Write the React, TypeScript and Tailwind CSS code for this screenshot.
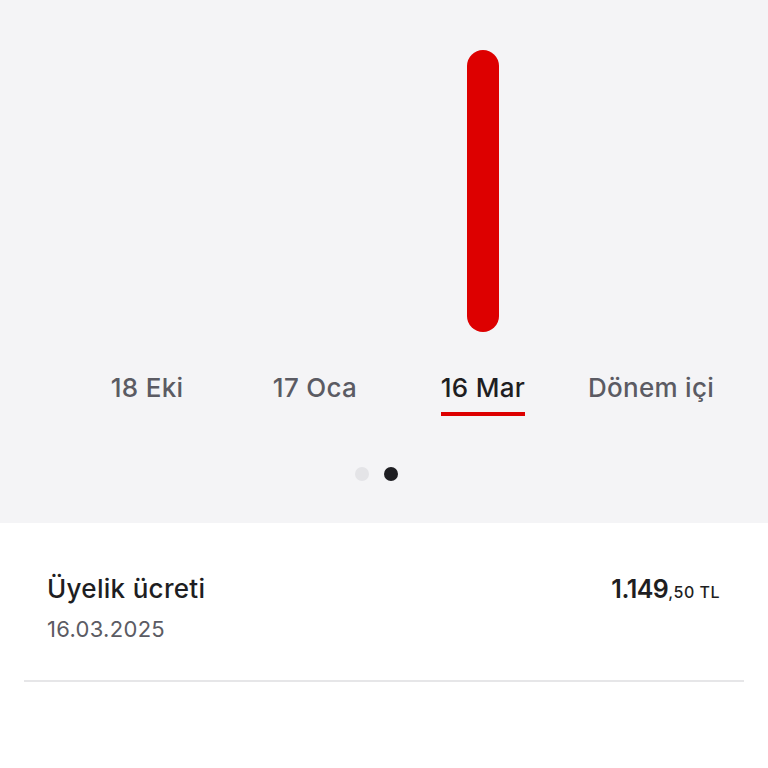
import React from "react";

const cols = [
  { label: "18 Eki", bar: 0, active: false },
  { label: "17 Oca", bar: 0, active: false },
  { label: "16 Mar", bar: 282, active: true },
  { label: "Dönem içi", bar: 0, active: false },
];

export default function App() {
  return (
    <div className="w-[768px] h-[768px] bg-white overflow-hidden" style={{ fontFamily: "Inter, 'Noto Sans', sans-serif" }}>
      <div className="bg-[#f4f4f6] h-[523px] pt-[50px] flex flex-col">
        <div className="grid grid-cols-[repeat(4,168px)] pl-[63px] h-[282px] items-end">
          {cols.map((c) => (
            <div key={c.label} className="flex justify-center items-end h-full">
              {c.bar > 0 && (
                <div className="w-[32px] rounded-full bg-[#dd0000]" style={{ height: c.bar }} />
              )}
            </div>
          ))}
        </div>
        <div className="grid grid-cols-[repeat(4,168px)] pl-[63px] mt-[40px]">
          {cols.map((c) => (
            <div key={c.label} className="flex justify-center">
              <div className="flex flex-col items-stretch">
                <span
                  className={`text-[26px] leading-[32px] font-medium tracking-[0.3px] ${c.active ? "text-[#1e1e22]" : "text-[#5b5b63]"}`}
                >
                  {c.label}
                </span>
                {c.active ? (
                  <div className="mt-[8px] h-[4px] bg-[#dd0000]" />
                ) : (
                  <div className="mt-[8px] h-[4px]" />
                )}
              </div>
            </div>
          ))}
        </div>
        <div className="flex justify-center gap-[15px] mt-[51px] pr-[15px]">
          <div className="w-[14px] h-[14px] rounded-full bg-[#e4e4e7]" />
          <div className="w-[14px] h-[14px] rounded-full bg-[#1e1e22]" />
        </div>
      </div>
      <div className="pt-[52px] px-[47px] pr-[48px] flex justify-between">
        <div className="flex flex-col">
          <span className="text-[26px] leading-[28px] font-medium tracking-[0.3px] text-[#1e1e22]">Üyelik ücreti</span>
          <span className="mt-[12px] text-[22px] leading-[28px] tracking-[0.3px] text-[#5b5b63]">16.03.2025</span>
        </div>
        <div className="flex items-baseline text-[#1e1e22] leading-[28px]">
          <span className="text-[25px] font-semibold tracking-[-0.5px]">1.149</span>
          <span className="text-[16px] font-medium tracking-[0.5px]">,50 TL</span>
        </div>
      </div>
      <div className="mx-[24px] mt-[37px] h-[2px] bg-[#e6e6e8]" />
    </div>
  );
}
